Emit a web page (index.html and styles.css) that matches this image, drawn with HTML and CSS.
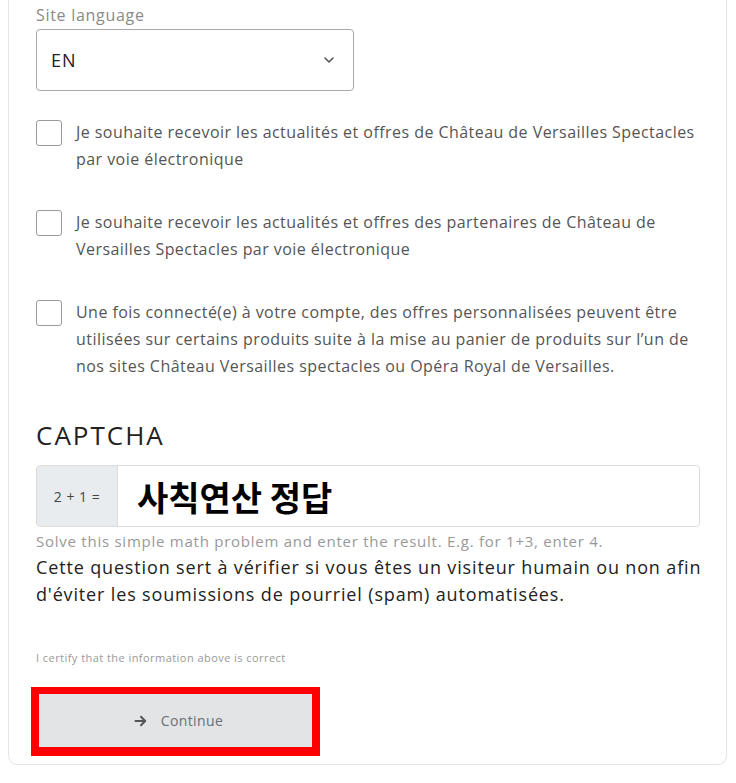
FILE: index.html
```html
<!DOCTYPE html>
<html lang="fr">
<head>
  <meta charset="UTF-8">
  <meta name="viewport" content="width=device-width, initial-scale=1.0">
  <title>Inscription</title>
  <link rel="stylesheet" href="styles.css">
</head>
<body>
  <div class="card">
    <div class="field">
      <label class="field-label" for="lang">Site language</label>
      <div class="select">
        <span>EN</span>
        <svg width="12" height="8" viewBox="0 0 12 8"><path d="M2 2l4 4 4-4" fill="none" stroke="#555" stroke-width="1.6" stroke-linecap="round" stroke-linejoin="round"/></svg>
      </div>
    </div>

    <div class="check">
      <span class="box"></span>
      <p>Je souhaite recevoir les actualités et offres de Château de Versailles Spectacles par voie électronique</p>
    </div>
    <div class="check">
      <span class="box"></span>
      <p>Je souhaite recevoir les actualités et offres des partenaires de Château de Versailles Spectacles par voie électronique</p>
    </div>
    <div class="check">
      <span class="box"></span>
      <p>Une fois connecté(e) à votre compte, des offres personnalisées peuvent être utilisées sur certains produits suite à la mise au panier de produits sur l’un de nos sites Château Versailles spectacles ou Opéra Royal de Versailles.</p>
    </div>

    <h2>CAPTCHA</h2>
    <div class="captcha">
      <span class="addon">2 + 1 =</span>
      <div class="answer">사칙연산 정답</div>
    </div>
    <p class="help">Solve this simple math problem and enter the result. E.g. for 1+3, enter 4.</p>
    <p class="desc">Cette question sert à vérifier si vous êtes un visiteur humain ou non afin d'éviter les soumissions de pourriel (spam) automatisées.</p>

    <p class="certify">I certify that the information above is correct</p>

    <div class="highlight">
      <button type="button" class="continue">
        <svg class="arrow" width="13" height="12" viewBox="0 0 13 12"><path d="M1.5 6h9.5M7 1.8l4.2 4.2L7 10.2" fill="none" stroke="#555" stroke-width="2" stroke-linecap="round" stroke-linejoin="round"/></svg>
        Continue
      </button>
    </div>
  </div>
</body>
</html>
```

FILE: styles.css
```css
body {
  margin: 0;
  font-family: "Open Sans", Arial, sans-serif;
  background: #fff;
}
.card {
  margin: 0 9px 0 8px;
  height: 765px;
  box-sizing: border-box;
  border: 1px solid #e3e3e3;
  border-top: none;
  border-radius: 0 0 9px 9px;
  padding: 5px 20px 0 27px;
}
.field-label {
  display: block;
  font-size: 16px;
  line-height: 20px;
  letter-spacing: 0.7px;
  color: #8a8a8a;
  margin-bottom: 4px;
}
.select {
  width: 318px;
  height: 62px;
  box-sizing: border-box;
  border: 1px solid #a9a9a9;
  border-radius: 4px;
  display: flex;
  align-items: center;
  justify-content: space-between;
  padding: 0 18px 0 14px;
  font-size: 18px;
  letter-spacing: 1px;
  color: #222;
}
.check {
  display: flex;
  align-items: flex-start;
  gap: 14px;
  margin-top: 28px;
  margin-right: 6px;
}
.check + .check {
  margin-top: 36px;
}
.box {
  flex: none;
  width: 26px;
  height: 26px;
  box-sizing: border-box;
  border: 1px solid #9a9a9a;
  border-radius: 3px;
  margin-top: 1px;
}
.check p {
  margin: 0;
  font-size: 16px;
  line-height: 27px;
  letter-spacing: 0.45px;
  color: #555;
}
h2 {
  margin: 40px 0 15px;
  font-size: 26px;
  line-height: 30px;
  letter-spacing: 2px;
  font-weight: 400;
  color: #222;
}
.captcha {
  display: flex;
  height: 62px;
  margin-right: 6px;
  box-sizing: border-box;
  border: 1px solid #dcdcdc;
  border-radius: 4px;
  overflow: hidden;
}
.addon {
  width: 80px;
  background: #e9ecef;
  border-right: 1px solid #dcdcdc;
  display: flex;
  align-items: center;
  justify-content: center;
  font-size: 14px;
  letter-spacing: 0.5px;
  color: #444;
}
.answer {
  display: flex;
  align-items: center;
  padding-left: 19px;
  font-family: "Noto Sans CJK KR", sans-serif;
  font-weight: 700;
  font-size: 34px;
  color: #000;
}
.help {
  margin: 5px 0 0;
  font-size: 15px;
  line-height: 18px;
  letter-spacing: 0.75px;
  color: #999;
}
.desc {
  margin: 4px 0 0;
  font-size: 18px;
  line-height: 27px;
  letter-spacing: 0.85px;
  color: #222;
}
.certify {
  margin: 43px 0 0;
  font-size: 11px;
  line-height: 14px;
  letter-spacing: 0.45px;
  color: #999;
}
.highlight {
  display: inline-block;
  margin: 22px 0 0 -5px;
  border: 8px solid #ff0000;
  border-top-width: 7px;
  border-bottom-width: 9px;
}
.continue {
  display: flex;
  align-items: center;
  justify-content: center;
  gap: 14px;
  width: 273px;
  height: 53px;
  padding: 0 0 0 6px;
  border: none;
  background: #e2e4e6;
  font-family: inherit;
  font-size: 14px;
  letter-spacing: 0.4px;
  color: #6b6f74;
}
```
